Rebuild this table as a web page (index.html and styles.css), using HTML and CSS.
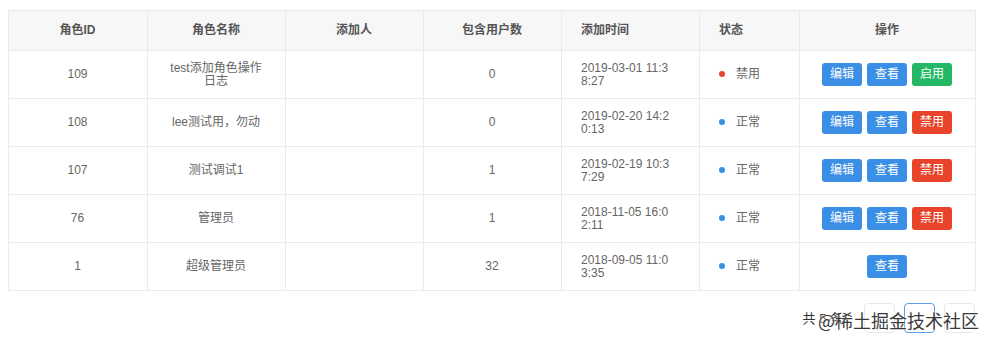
FILE: index.html
```html
<!DOCTYPE html>
<html lang="zh-CN">
<head>
<meta charset="utf-8">
<title>角色列表</title>
<link rel="stylesheet" href="styles.css">
</head>
<body>
<div class="page">
  <table class="grid">
    <colgroup>
      <col class="c1"><col class="c2"><col class="c3"><col class="c4"><col class="c5"><col class="c6"><col class="c7">
    </colgroup>
    <thead>
      <tr>
        <th class="ctr">角色ID</th>
        <th class="ctr">角色名称</th>
        <th class="ctr">添加人</th>
        <th class="ctr">包含用户数</th>
        <th class="lft">添加时间</th>
        <th class="lft">状态</th>
        <th class="ctr">操作</th>
      </tr>
    </thead>
    <tbody>
      <tr>
        <td class="ctr">109</td>
        <td class="ctr">test添加角色操作日志</td>
        <td class="ctr"></td>
        <td class="ctr">0</td>
        <td class="lft tm">2019-03-01 11:38:27</td>
        <td class="lft"><span class="dot red"></span>禁用</td>
        <td class="ctr"><div class="ops"><span class="btn blue">编辑</span><span class="btn blue">查看</span><span class="btn green">启用</span></div></td>
      </tr>
      <tr>
        <td class="ctr">108</td>
        <td class="ctr">lee测试用，勿动</td>
        <td class="ctr"></td>
        <td class="ctr">0</td>
        <td class="lft tm">2019-02-20 14:20:13</td>
        <td class="lft"><span class="dot blu"></span>正常</td>
        <td class="ctr"><div class="ops"><span class="btn blue">编辑</span><span class="btn blue">查看</span><span class="btn red">禁用</span></div></td>
      </tr>
      <tr>
        <td class="ctr">107</td>
        <td class="ctr">测试调试1</td>
        <td class="ctr"></td>
        <td class="ctr">1</td>
        <td class="lft tm">2019-02-19 10:37:29</td>
        <td class="lft"><span class="dot blu"></span>正常</td>
        <td class="ctr"><div class="ops"><span class="btn blue">编辑</span><span class="btn blue">查看</span><span class="btn red">禁用</span></div></td>
      </tr>
      <tr>
        <td class="ctr">76</td>
        <td class="ctr">管理员</td>
        <td class="ctr"></td>
        <td class="ctr">1</td>
        <td class="lft tm">2018-11-05 16:02:11</td>
        <td class="lft"><span class="dot blu"></span>正常</td>
        <td class="ctr"><div class="ops"><span class="btn blue">编辑</span><span class="btn blue">查看</span><span class="btn red">禁用</span></div></td>
      </tr>
      <tr>
        <td class="ctr">1</td>
        <td class="ctr">超级管理员</td>
        <td class="ctr"></td>
        <td class="ctr">32</td>
        <td class="lft tm">2018-09-05 11:03:35</td>
        <td class="lft"><span class="dot blu"></span>正常</td>
        <td class="ctr"><div class="ops"><span class="btn blue">查看</span></div></td>
      </tr>
    </tbody>
  </table>
  <div class="pager">
    <span class="total">共 5 条</span>
    <span class="pg"></span>
    <span class="pg active"></span>
    <span class="pg"></span>
    <span class="mark">@稀土掘金技术社区</span>
  </div>
</div>
</body>
</html>
```
FILE: styles.css
```css
html, body {
  margin: 0;
  background: #fff;
}
body {
  font-family: "Liberation Sans", "Noto Sans CJK SC", sans-serif;
  font-size: 12px;
  color: #666;
}
.page {
  padding: 10px 17px 0 8px;
}
.grid {
  border-collapse: collapse;
  table-layout: fixed;
  width: 967px;
  border: 1px solid #e6e6e6;
}
.c1 { width: 139px; }
.c2, .c3, .c4, .c5 { width: 138px; }
.c6 { width: 100px; }
.c7 { width: 176px; }
.grid th, .grid td {
  border: 1px solid #ebebeb;
  padding: 0 20px 0 19px;
  line-height: 12.5px;
  word-break: break-all;
}
.grid th {
  height: 39px;
  background: #f7f7f7;
  color: #555;
  font-weight: 600;
}
.grid td {
  height: 47px;
}
.grid td.tm {
  padding-right: 26px;
}
.ctr { text-align: center; }
.lft { text-align: left; }
.dot {
  display: inline-block;
  width: 6px;
  height: 6px;
  border-radius: 50%;
  margin-right: 11px;
  vertical-align: 1px;
}
.dot.red { background: #e8432b; }
.dot.blu { background: #3a8ee6; }
.ops {
  display: flex;
  justify-content: center;
  gap: 5px;
}
.btn {
  display: inline-flex;
  align-items: center;
  justify-content: center;
  width: 40px;
  height: 23px;
  border-radius: 3px;
  color: #fff;
  font-size: 12px;
}
.btn.blue { background: #3a8ee6; }
.btn.green { background: #25b864; }
.btn.red { background: #e8432b; }
.pager {
  position: relative;
  display: flex;
  justify-content: flex-end;
  align-items: center;
  margin-top: 11px;
  height: 31px;
}
.total {
  font-size: 13px;
  color: #333;
  margin-right: 21px;
}
.pg {
  box-sizing: border-box;
  width: 31px;
  height: 30px;
  border: 1px solid #e8e8e8;
  border-radius: 4px;
  margin-left: 9px;
}
.pg.active {
  border-color: #5c9eea;
}
.total + .pg {
  margin-left: 0;
}
.mark {
  position: absolute;
  left: 810px;
  top: 7px;
  white-space: nowrap;
  font-family: "Noto Sans CJK SC", sans-serif;
  font-size: 18px;
  line-height: 22px;
  color: #3a3a3a;
  text-shadow: 0 0 2px #fff, 0 0 2px #fff;
}
```
